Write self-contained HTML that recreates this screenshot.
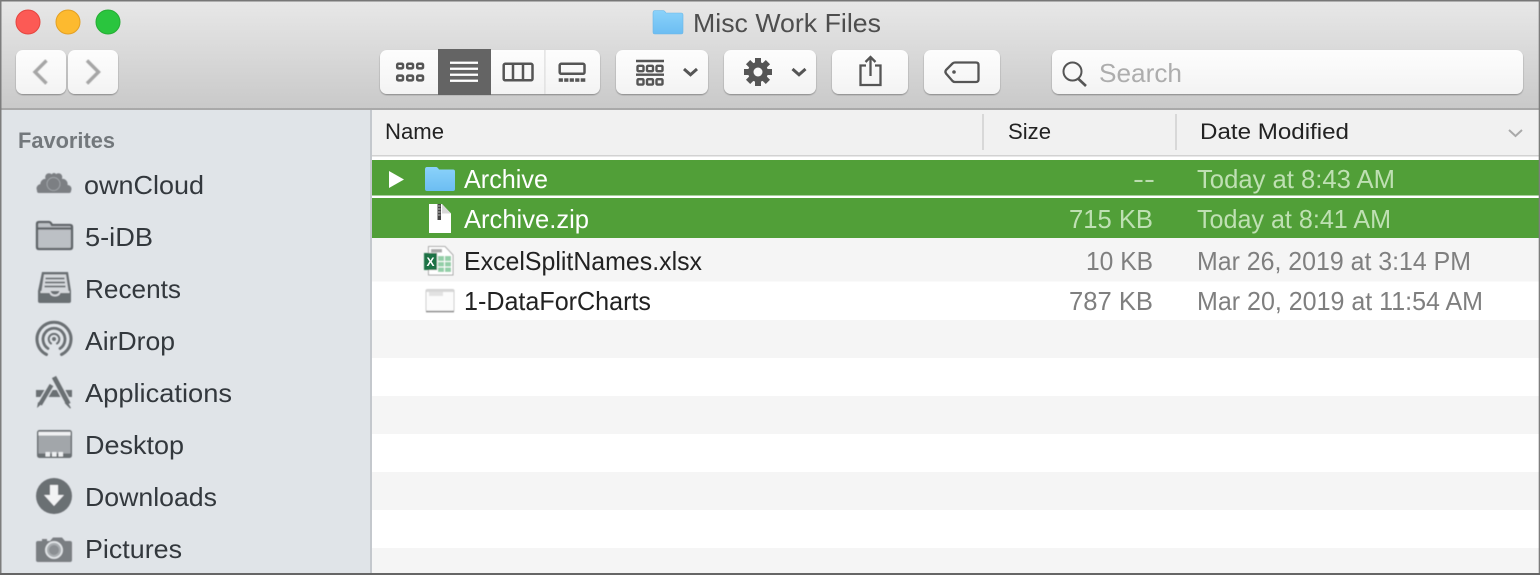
<!DOCTYPE html>
<html>
<head>
<meta charset="utf-8">
<style>
html,body{margin:0;padding:0;background:#fff;width:1540px;height:575px;overflow:hidden}
svg{display:block}
text{font-family:"Liberation Sans",sans-serif;font-size:26px}
</style>
</head>
<body>
<svg xmlns="http://www.w3.org/2000/svg" width="1540" height="575" viewBox="0 0 1540 575">
<defs>
<linearGradient id="tb" x1="0" y1="0" x2="0" y2="1"><stop offset="0" stop-color="#e8e8e8"/><stop offset="1" stop-color="#c9c9c9"/></linearGradient>
<linearGradient id="btn" x1="0" y1="0" x2="0" y2="1"><stop offset="0" stop-color="#fdfdfd"/><stop offset="1" stop-color="#f3f3f3"/></linearGradient>
<linearGradient id="fold" x1="0" y1="0" x2="0" y2="1"><stop offset="0" stop-color="#8ad2fa"/><stop offset="1" stop-color="#6cbdf2"/></linearGradient>
<filter id="s" x="-10%" y="-10%" width="120%" height="130%"><feDropShadow dx="0" dy="1" stdDeviation="0.7" flood-color="#000" flood-opacity=".35"/></filter>
<filter id="b" x="-5%" y="-5%" width="110%" height="110%"><feGaussianBlur stdDeviation="0.45"/></filter>
<filter id="c" x="-5%" y="-5%" width="110%" height="110%"><feGaussianBlur stdDeviation="0.3"/></filter>
</defs>

<!-- backgrounds -->
<rect width="1540" height="575" fill="#fff"/>
<rect x="0" y="0" width="1540" height="109" fill="url(#tb)"/>
<rect x="0" y="108" width="1540" height="2" fill="#a9a9a9"/>
<rect x="0" y="110" width="371" height="465" fill="#e0e4e8"/>
<rect x="370" y="110" width="2" height="465" fill="#c4c8cd"/>

<!-- header -->
<rect x="372" y="110" width="1168" height="45" fill="#f1f1f1"/>
<rect x="372" y="155" width="1168" height="1.5" fill="#d2d2d2"/>
<rect x="982" y="114" width="2" height="36" fill="#d8d8d8"/>
<rect x="1175" y="114" width="2" height="36" fill="#d8d8d8"/>

<!-- rows -->
<rect x="372" y="160" width="1168" height="35.500" fill="#519f38"/>
<rect x="372" y="198" width="1168" height="40" fill="#519f38"/>
<rect x="372" y="238" width="1168" height="43.500" fill="#f5f5f5"/>
<rect x="372" y="320" width="1168" height="38" fill="#f5f5f5"/>
<rect x="372" y="396" width="1168" height="38" fill="#f5f5f5"/>
<rect x="372" y="472" width="1168" height="38" fill="#f5f5f5"/>
<rect x="372" y="548" width="1168" height="27" fill="#f5f5f5"/>

<!-- window edge -->
<rect x="0" y="0" width="1540" height="1.5" fill="#777"/>
<rect x="0" y="0" width="1.5" height="575" fill="#7d7d7d"/>
<rect x="1538.700" y="0" width="1.300" height="575" fill="#7d7d7d"/>
<rect x="0" y="573" width="1540" height="2" fill="#666"/>

<!-- traffic lights -->
<circle cx="28" cy="22" r="12" fill="#fc5a55" stroke="#e5453f" stroke-width="1"/>
<circle cx="68" cy="22" r="12" fill="#fdba2f" stroke="#e3a023" stroke-width="1"/>
<circle cx="108" cy="22" r="12" fill="#2ac53e" stroke="#25ad34" stroke-width="1"/>

<!-- title -->
<path d="M653 13q0-2.500 2-2.500h8q1.500 0 3 2.500h15q2 0 2 2v17q0 2-2 2h-26q-2 0-2-2z" fill="url(#fold)" stroke="#6bb6e6" stroke-width=".6"/>
<text x="693" y="32" textLength="188" lengthAdjust="spacingAndGlyphs" fill="#4e4e4e">Misc Work Files</text>

<!-- toolbar buttons -->
<g fill="url(#btn)" filter="url(#s)">
<rect x="16" y="50" width="50" height="44" rx="7"/>
<rect x="68" y="50" width="50" height="44" rx="7"/>
<rect x="380" y="50" width="220" height="44" rx="7"/>
<rect x="616" y="50" width="92" height="44" rx="7"/>
<rect x="724" y="50" width="92" height="44" rx="7"/>
<rect x="832" y="50" width="76" height="44" rx="7"/>
<rect x="924" y="50" width="76" height="44" rx="7"/>
<rect x="1052" y="50" width="471" height="44" rx="7"/>
</g>
<g filter="url(#b)">
<path d="M46.500 60.500 35 72l11.500 11.500" fill="none" stroke="#a6a6a6" stroke-width="3.400"/>
<path d="M87 60.500 98.500 72 87 83.500" fill="none" stroke="#a6a6a6" stroke-width="3.400"/>
</g>

<!-- view segments -->
<rect x="438" y="49" width="53" height="46" fill="#646464"/>
<rect x="544.300" y="50" width="1.200" height="44" fill="#dcdcdc"/>
<g filter="url(#c)">
<g fill="none" stroke="#555" stroke-width="2.500">
<rect x="397.200" y="63.800" width="5.800" height="4.600" rx="1.200"/><rect x="407.200" y="63.800" width="5.800" height="4.600" rx="1.200"/><rect x="417.200" y="63.800" width="5.800" height="4.600" rx="1.200"/>
<rect x="397.200" y="75.600" width="5.800" height="4.800" rx="1.200"/><rect x="407.200" y="75.600" width="5.800" height="4.800" rx="1.200"/><rect x="417.200" y="75.600" width="5.800" height="4.800" rx="1.200"/>
<rect x="503.700" y="63.800" width="28.800" height="16.500" rx="1.500"/><path d="M513 63.800v16.500M523 63.800v16.500"/>
<rect x="559.700" y="63.800" width="24.800" height="10" rx="1.500"/>
</g>
<g fill="#fff"><rect x="450" y="61.600" width="28" height="2.300"/><rect x="450" y="67.600" width="28" height="2.300"/><rect x="450" y="73.600" width="28" height="2.300"/><rect x="450" y="79.600" width="28" height="2.300"/></g>
<g fill="#555"><rect x="558.700" y="78.300" width="4.200" height="3.500"/><rect x="564.200" y="78.300" width="4.200" height="3.500"/><rect x="569.700" y="78.300" width="4.200" height="3.500"/><rect x="575.200" y="78.300" width="4.200" height="3.500"/><rect x="580.700" y="78.300" width="4.600" height="3.500"/></g>

<!-- group -->
<g fill="none" stroke="#555" stroke-width="2.400">
<path d="M636 61h28M636 74.700h28"/>
<rect x="637.500" y="65.800" width="6" height="5.400" rx="1"/><rect x="647" y="65.800" width="6" height="5.400" rx="1"/><rect x="656.500" y="65.800" width="6" height="5.400" rx="1"/>
<rect x="637.500" y="79.200" width="6" height="5.400" rx="1"/><rect x="647" y="79.200" width="6" height="5.400" rx="1"/><rect x="656.500" y="79.200" width="6" height="5.400" rx="1"/>
</g>
<path d="M684 69l6.500 5.800 6.500-5.800" fill="none" stroke="#555" stroke-width="3"/>

<!-- gear -->
<g transform="translate(758 72)" fill="#555">
<rect x="-3" y="-14" width="6" height="28"/>
<rect x="-3" y="-14" width="6" height="28" transform="rotate(45)"/>
<rect x="-3" y="-14" width="6" height="28" transform="rotate(90)"/>
<rect x="-3" y="-14" width="6" height="28" transform="rotate(135)"/>
<circle r="10"/>
<circle r="4.500" fill="#f8f8f8"/>
</g>
<path d="M792.500 69l6.500 5.800 6.500-5.800" fill="none" stroke="#555" stroke-width="3"/>

<!-- share -->
<g fill="none" stroke="#555" stroke-width="2.300">
<path d="M866 65.500h-5.500v19.500h20V65.500H875"/>
<path d="M870.500 57.500v18.500"/>
<path d="M865.500 62l5-5 5 5"/>
</g>

<!-- tag -->
<path d="M955 62.500h21q2.500 0 2.500 2.500v14.500q0 2.500-2.500 2.500h-21q-1.500 0-2.500-1l-6.500-7.500q-1.200-1.700 0-3.500l6.500-6.500q1-1 2.500-1z" fill="none" stroke="#555" stroke-width="2.300"/>
<circle cx="954" cy="72" r="1.800" fill="#555"/>
</g>

<!-- search -->
<circle cx="1072.500" cy="71.500" r="9" fill="none" stroke="#555" stroke-width="2"/>
<path d="M1078 78.500l8 7.500" stroke="#555" stroke-width="2.600"/>
<text x="1099" y="82" textLength="83" lengthAdjust="spacingAndGlyphs" fill="#adadad">Search</text>

<!-- sidebar -->
<text x="18" y="148" textLength="97" lengthAdjust="spacingAndGlyphs" style="font-size:22px;font-weight:bold" fill="#73787c">Favorites</text>
<g fill="#33383d">
<text x="84" y="194" textLength="120" lengthAdjust="spacingAndGlyphs">ownCloud</text>
<text x="85" y="246" textLength="68" lengthAdjust="spacingAndGlyphs">5-iDB</text>
<text x="85" y="298" textLength="96" lengthAdjust="spacingAndGlyphs">Recents</text>
<text x="85" y="350" textLength="90" lengthAdjust="spacingAndGlyphs">AirDrop</text>
<text x="85" y="402" textLength="147" lengthAdjust="spacingAndGlyphs">Applications</text>
<text x="85" y="454" textLength="99" lengthAdjust="spacingAndGlyphs">Desktop</text>
<text x="85" y="506" textLength="132" lengthAdjust="spacingAndGlyphs">Downloads</text>
<text x="85" y="558" textLength="97" lengthAdjust="spacingAndGlyphs">Pictures</text>
</g>

<!-- sidebar icons -->
<g filter="url(#b)">
<!-- cloud -->
<g fill="#7b7f83">
<circle cx="54" cy="183" r="9"/><circle cx="45.500" cy="184" r="5.200"/><circle cx="62.500" cy="184" r="5.200"/><circle cx="41" cy="188.500" r="4.500"/><circle cx="49" cy="177" r="3.800"/><circle cx="58.500" cy="177" r="3.800"/><circle cx="54" cy="175.500" r="2.500"/><circle cx="67.500" cy="189" r="4"/>
<rect x="37" y="189" width="34" height="4" rx="2"/>
</g>
<circle cx="53.500" cy="184" r="6.500" fill="none" stroke="#e0e4e8" stroke-width=".7" stroke-opacity=".5"/>
<!-- folder -->
<path d="M37 224q0-2 2-2h10q1.500 0 3 3h18q2 0 2 2v20q0 2-2 2H39q-2 0-2-2z" fill="#bcc0c5" stroke="#5f6367" stroke-width="2.300"/>
<path d="M37 228.500h35" stroke="#5f6367" stroke-width="2.300"/>
<!-- recents -->
<path d="M42 272h26l3 19v10q0 2-2 2H40q-2 0-2-2v-10z" fill="#6b6f73"/>
<path d="M44 274.500h22l2.500 16.500H41.500z" fill="#d5d8dc"/>
<path d="M45.500 278.500h19M45 282.500h20M44.500 286.500h21" stroke="#6b6f73" stroke-width="1.700"/>
<path d="M40.500 291h10q1 3.500 4.500 3.500t4.500-3.500h10v2h-9q-1 3.500-5.500 3.500T49.500 293h-9z" fill="#d5d8dc"/>
<!-- airdrop -->
<g fill="none" stroke="#6b6f73" stroke-linecap="round">
<path d="M46.500 354.500a17 17 0 1 1 15 0" stroke-width="3"/>
<path d="M48 348.500a11 11 0 1 1 12 0" stroke-width="2.800"/>
<path d="M51 343.500a5.300 5.300 0 1 1 6 0" stroke-width="2"/>
</g>
<circle cx="54" cy="339" r="2" fill="#6b6f73"/>
<!-- apps -->
<path d="M36 390h36v7H36z" fill="#6b6f73"/>
<path d="M54 377l14.500 27" stroke="#e0e4e8" stroke-width="7.500" fill="none"/>
<path d="M51.500 385L40 404.500" stroke="#e0e4e8" stroke-width="7" fill="none"/>
<path d="M54 377l14.500 27" stroke="#6b6f73" stroke-width="5" fill="none"/>
<path d="M51.500 385L40 404.500" stroke="#6b6f73" stroke-width="4.500" fill="none"/>
<path d="M67 401l4 7-1 .5-5.500-5.500zM38 402l3.500 2-4.500 4z" fill="#6b6f73"/>
<!-- desktop -->
<rect x="37" y="430" width="35" height="28" rx="2.500" fill="#6b6f73"/>
<rect x="38.500" y="431.800" width="32" height="3.700" fill="#f0f1f3"/>
<rect x="38.500" y="435.500" width="32" height="18" fill="#a2a6aa"/>
<rect x="45.500" y="452" width="4.500" height="4.500" fill="#eef0f2"/><rect x="52" y="452" width="4.500" height="4.500" fill="#eef0f2"/><rect x="58.500" y="452" width="4.500" height="4.500" fill="#eef0f2"/>
<!-- downloads -->
<circle cx="54" cy="496" r="18" fill="#6b6f73"/>
<path d="M50 485h8v10h6l-10 11-10-11h6z" fill="#f2f3f4"/>
<!-- camera -->
<path d="M38 541h4v-2h5v2h3l3-3.500h9l3 3.500h5q2 0 2 2v17q0 2-2 2H38q-2 0-2-2v-17q0-2 2-2z" fill="#7a7e82"/>
<circle cx="54" cy="550" r="8" fill="#a9adb1" stroke="#e3e6e9" stroke-width="1.800"/>
<circle cx="54" cy="550" r="5" fill="#8b8f93"/>
</g>

<!-- header text -->
<g fill="#222">
<text x="385" y="139" textLength="59" lengthAdjust="spacingAndGlyphs" style="font-size:22px">Name</text>
<text x="1008" y="139" textLength="43" lengthAdjust="spacingAndGlyphs" style="font-size:22px">Size</text>
<text x="1200" y="139" textLength="149" lengthAdjust="spacingAndGlyphs" style="font-size:22px">Date Modified</text>
</g>
<path d="M1509 130l6.500 6 6.500-6" fill="none" stroke="#a9a9a9" stroke-width="2"/>

<!-- row 1 -->
<path d="M389 171l15 8.500-15 8.500z" fill="#fff"/>
<path d="M425 169.500q0-2.500 2-2.500h9q1.500 0 3 2.500h14q2 0 2 2v17.500q0 2-2 2h-26q-2 0-2-2z" fill="url(#fold)"/>
<text x="464" y="188" textLength="84" lengthAdjust="spacingAndGlyphs" fill="#fff">Archive</text>
<text x="1133" y="188" textLength="22" lengthAdjust="spacingAndGlyphs" fill="#bcdcb0">--</text>
<text x="1197" y="188" textLength="198" lengthAdjust="spacingAndGlyphs" fill="#bfe0b3">Today at 8:43 AM</text>

<!-- row 2 -->
<path d="M429 204h13l9 9.500V233h-22z" fill="#fff"/>
<path d="M442 204l9 9.500h-9z" fill="#d9d9d9"/>
<g filter="url(#c)"><rect x="437.500" y="204" width="3.500" height="16" fill="#444"/>
<path d="M438 206h2.500M438 209h2.500M438 212h2.500M438 215h2.500" stroke="#bbb" stroke-width=".9"/></g>
<text x="464" y="228" textLength="125" lengthAdjust="spacingAndGlyphs" fill="#fff">Archive.zip</text>
<text x="1069" y="228" textLength="84" lengthAdjust="spacingAndGlyphs" fill="#bfe0b3">715 KB</text>
<text x="1197" y="228" textLength="194" lengthAdjust="spacingAndGlyphs" fill="#bfe0b3">Today at 8:41 AM</text>

<!-- row 3 -->
<g filter="url(#b)">
<path d="M428.500 246.500H445l8 8.500v20h-24.500z" fill="#fff" stroke="#a8a8a8" stroke-width="1"/>
<path d="M431 249h11v3.500h-11z" fill="#aaa"/>
<rect x="438" y="256" width="13" height="16" fill="#93cfa8"/>
<path d="M438 261.500h13M438 267h13M444.500 256v16" stroke="#fff" stroke-width="1"/>
<rect x="424" y="253" width="13" height="17" fill="#1f7244"/>
</g>
<text x="430.500" y="266" text-anchor="middle" style="font-size:12px;font-weight:bold" fill="#fff">X</text>
<text x="464" y="270" textLength="238" lengthAdjust="spacingAndGlyphs" fill="#222">ExcelSplitNames.xlsx</text>
<text x="1086" y="270" textLength="67" lengthAdjust="spacingAndGlyphs" fill="#7f7f7f">10 KB</text>
<text x="1197" y="270" textLength="274" lengthAdjust="spacingAndGlyphs" fill="#7f7f7f">Mar 26, 2019 at 3:14 PM</text>

<!-- row 4 -->
<g filter="url(#b)">
<rect x="426" y="289.500" width="28" height="22" rx="1.500" fill="#fbfbfb" stroke="#cfcfcf" stroke-width="1"/>
<rect x="426.500" y="290" width="27" height="2" fill="#d8d8d8"/>
<rect x="429" y="292" width="14" height="4" fill="#e2e2e2"/>
<rect x="426" y="310.800" width="28" height="1.500" fill="#8a8a8a"/>
</g>
<text x="464" y="310" textLength="187" lengthAdjust="spacingAndGlyphs" fill="#222">1-DataForCharts</text>
<text x="1069" y="310" textLength="84" lengthAdjust="spacingAndGlyphs" fill="#7f7f7f">787 KB</text>
<text x="1197" y="310" textLength="286" lengthAdjust="spacingAndGlyphs" fill="#7f7f7f">Mar 20, 2019 at 11:54 AM</text>
</svg>
</body>
</html>
